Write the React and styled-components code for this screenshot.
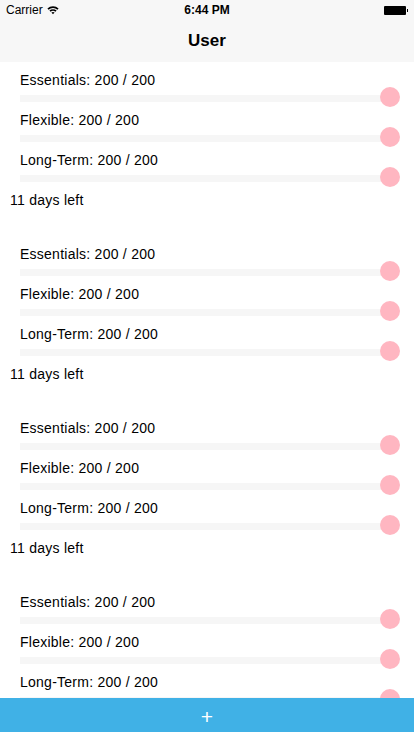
import React from 'react'
import styled, { createGlobalStyle } from 'styled-components'

const GlobalStyle = createGlobalStyle`
  html, body {
    margin: 0;
    padding: 0;
    background: #ffffff;
  }
  body {
    font-family: "Liberation Sans", Arial, sans-serif;
    color: #000;
  }
`

const Screen = styled.div`
  width: 414px;
  height: 732px;
  display: flex;
  flex-direction: column;
  overflow: hidden;
  background: #fff;
`

const StatusBar = styled.div`
  height: 20px;
  background: #f7f7f7;
  display: grid;
  grid-template-columns: 1fr auto 1fr;
  align-items: center;
  padding: 0 6px;
  font-size: 12px;
`

const Carrier = styled.div`
  display: flex;
  align-items: center;
  gap: 4px;
`

const Clock = styled.div`
  font-weight: bold;
`

const BatteryWrap = styled.div`
  display: flex;
  justify-content: flex-end;
  align-items: center;
`

const Battery = styled.div`
  width: 22px;
  height: 9px;
  background: #000;
  border-radius: 1px;
  position: relative;
  margin-right: 2px;
  &::after {
    content: '';
    position: absolute;
    right: -2px;
    top: 3px;
    width: 1.5px;
    height: 3px;
    background: #000;
  }
`

const NavBar = styled.div`
  height: 42px;
  background: #f7f7f7;
  display: flex;
  align-items: center;
  justify-content: center;
  font-size: 17px;
  font-weight: bold;
`

const List = styled.div`
  flex: 1;
  overflow: hidden;
`

const Group = styled.div`
  padding-top: 9px;
  padding-bottom: 27px;
`

const Row = styled.div`
  display: flex;
  flex-direction: column;
  padding: 0 14px 4px 20px;
`

const Label = styled.div`
  font-size: 14px;
  line-height: 18px;
  letter-spacing: 0.25px;
`

const Slider = styled.div`
  position: relative;
  height: 20px;
  margin-top: -2px;
  margin-right: 10px;
  display: flex;
  align-items: center;
`

const Track = styled.div`
  flex: 1;
  height: 7px;
  margin-top: 3px;
  background: #f6f6f6;
`

const Thumb = styled.div`
  position: absolute;
  top: 0;
  width: 20px;
  height: 20px;
  border-radius: 50%;
  background: #ffb6c1;
  transform: translateX(-50%);
`

const DaysLeft = styled.div`
  font-size: 14px;
  line-height: 18px;
  letter-spacing: 0.25px;
  padding-left: 10px;
`

const AddButton = styled.button`
  height: 34px;
  flex-shrink: 0;
  border: none;
  background: #40b1e6;
  color: #fff;
  font-size: 21px;
  font-weight: normal;
  line-height: 1;
  font-family: "Liberation Sans", Arial, sans-serif;
  display: flex;
  align-items: center;
  justify-content: center;
  padding: 2px 0 0;
`

const WifiIcon = () => (
  <svg width="12" height="10" viewBox="0 0 12 10">
    <path d="M0.4 3.6 A8 8 0 0 1 11.6 3.6 L10.4 4.8 A6.3 6.3 0 0 0 1.6 4.8 Z" fill="#000" />
    <path d="M2.4 5.6 A5.2 5.2 0 0 1 9.6 5.6 L8.4 6.8 A3.5 3.5 0 0 0 3.6 6.8 Z" fill="#000" />
    <path d="M4.4 7.6 A2.4 2.4 0 0 1 7.6 7.6 L6 9.3 Z" fill="#000" />
  </svg>
)

const budgets = [
  { name: 'Essentials', value: 200, max: 200 },
  { name: 'Flexible', value: 200, max: 200 },
  { name: 'Long-Term', value: 200, max: 200 },
]

const users = [1, 2, 3, 4]

const BudgetRow = ({ name, value, max }) => (
  <Row>
    <Label>{name}: {value} / {max}</Label>
    <Slider>
      <Track />
      <Thumb style={{ left: `${(value / max) * 100}%` }} />
    </Slider>
  </Row>
)

const App = () => (
  <Screen>
    <GlobalStyle />
    <StatusBar>
      <Carrier>Carrier <WifiIcon /></Carrier>
      <Clock>6:44 PM</Clock>
      <BatteryWrap><Battery /></BatteryWrap>
    </StatusBar>
    <NavBar>User</NavBar>
    <List>
      {users.map(id => (
        <Group key={id}>
          {budgets.map(b => <BudgetRow key={b.name} {...b} />)}
          <DaysLeft>11 days left</DaysLeft>
        </Group>
      ))}
    </List>
    <AddButton type="button">+</AddButton>
  </Screen>
)

export default App
